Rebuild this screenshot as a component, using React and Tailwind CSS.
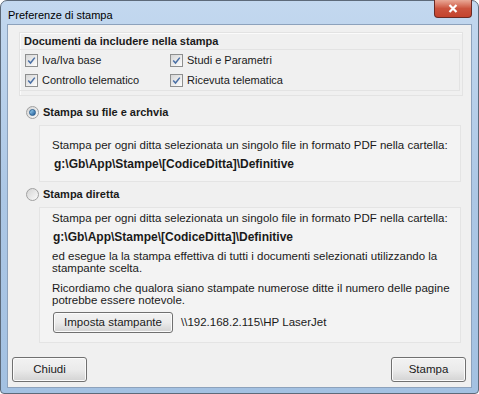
import React from "react";

const font = { fontFamily: '"Liberation Sans", Arial, sans-serif' };

const Check = ({ label }) => (
  <div className="flex items-center gap-[4px] h-[20px]">
    <div className="w-[13px] h-[13px] border border-[#8e8f8f] bg-gradient-to-br from-[#d6d6d6] to-[#fdfdfd] flex items-center justify-center">
      <svg width="9" height="9" viewBox="0 0 9 9">
        <path d="M1.2 4.6 L3.5 7 L7.8 1.6" fill="none" stroke="#4a6fa5" strokeWidth="1.5" />
      </svg>
    </div>
    <span>{label}</span>
  </div>
);

const Radio = ({ checked, label }) => (
  <div className="flex items-center gap-[4px] h-[20px] font-bold">
    <div className="w-[13px] h-[13px] rounded-full border border-[#a0a0a0] bg-gradient-to-br from-[#d4d4d4] to-[#fbfbfb] flex items-center justify-center">
      {checked && (
        <div className="w-[7px] h-[7px] rounded-full bg-gradient-to-br from-[#9fd8f8] to-[#1d5a96] border border-[#2a5f8f]" />
      )}
    </div>
    <span>{label}</span>
  </div>
);

const Btn = ({ children, className }) => (
  <div
    className={`flex items-center justify-center rounded-[3px] border border-[#707070] bg-gradient-to-b from-[#f2f2f2] via-[#ebebeb] to-[#d3d3d3] shadow-[inset_0_0_0_1px_#fbfbfb] text-[11.5px] ${className}`}
  >
    {children}
  </div>
);

export default function App() {
  return (
    <div
      style={font}
      className="w-[479px] h-[394px] text-[11px] text-[#1a1a1a] bg-white"
    >
      <div className="w-full h-full rounded-t-[7px] rounded-b-[4px] border border-[#5d6a7a] bg-gradient-to-b from-[#c3d8ef] via-[#acc7e5] to-[#a3c1e2] flex flex-col px-[6px] pb-[5px]">
        {/* title bar */}
        <div className="h-[23px] flex items-start justify-between">
          <span className="pl-[1px] pt-[6px] text-[11px] text-black">
            Preferenze di stampa
          </span>
          <div className="w-[38px] h-[18px] mt-[-1px] rounded-b-[4px] border border-t-0 border-[#6b2a24] bg-gradient-to-b from-[#e9a897] via-[#cb533e] to-[#c4432d] flex items-center justify-center">
            <svg width="12" height="9" viewBox="0 0 12 9">
              <path d="M2.5 1 L9.5 8 M9.5 1 L2.5 8" stroke="white" strokeWidth="2.2" />
            </svg>
          </div>
        </div>

        {/* client area */}
        <div className="flex-1 bg-[#f0f0f0] border border-[#8da2bc] flex flex-col pl-[11px] pr-[8px] pt-[7px]">
          {/* group documenti */}
          <div className="h-[64px] border border-[#e3e3e3] shadow-[inset_1px_1px_0_#fbfbfb] pl-[4px] pt-[1px]">
            <div className="font-bold h-[14px] leading-[14px]">
              Documenti da includere nella stampa
            </div>
            <div className="border border-[#e3e3e3] border-l-0 ml-[-4px] mr-[2px] pl-[5px] mt-[1px] grid grid-cols-[145px_1fr]">
              <Check label="Iva/Iva base" />
              <Check label="Studi e Parametri" />
              <Check label="Controllo telematico" />
              <Check label="Ricevuta telematica" />
            </div>
          </div>

          {/* stampa su file */}
          <div className="pl-[7px] mt-[6px]">
            <Radio checked label="Stampa su file e archvia" />
          </div>
          <div className="h-[57px] ml-[20px] mr-[2px] mt-[3px] border border-[#e4e4e4] bg-[#f3f3f3] pl-[12px] pt-[10px] leading-[19px] text-[11.5px] whitespace-nowrap">
            <div>
              Stampa per ogni ditta selezionata un singolo file in formato PDF
              nella cartella:
            </div>
            <div className="font-bold pl-[2px] text-[12px]">
              g:\Gb\App\Stampe\[CodiceDitta]\Definitive
            </div>
          </div>

          {/* stampa diretta */}
          <div className="pl-[7px] mt-[2px]">
            <Radio label="Stampa diretta" />
          </div>
          <div className="h-[136px] ml-[20px] mr-[2px] mt-[3px] border border-[#e4e4e4] bg-[#f3f3f3] pl-[12px] pt-[1px] text-[11.5px] whitespace-nowrap">
            <div className="leading-[19px]">
              Stampa per ogni ditta selezionata un singolo file in formato PDF
              nella cartella:
            </div>
            <div className="font-bold pl-[1px] leading-[19px] text-[12px]">
              g:\Gb\App\Stampe\[CodiceDitta]\Definitive
            </div>
            <div className="mt-[4px] leading-[11.5px]">
              ed esegue la la stampa effettiva di tutti i documenti selezionati
              utilizzando la
              <br />
              stampante scelta.
            </div>
            <div className="mt-[9px] leading-[11.5px]">
              Ricordiamo che qualora siano stampate numerose ditte il numero
              delle pagine
              <br />
              potrebbe essere notevole.
            </div>
            <div className="flex items-center mt-[6px] gap-[8px] ml-[1px]">
              <Btn className="w-[120px] h-[21px]">Imposta stampante</Btn>
              <span>\\192.168.2.115\HP LaserJet</span>
            </div>
          </div>

          {/* bottom buttons */}
          <div className="flex justify-between mt-[14px] ml-[-7px] mr-[-3px]">
            <Btn className="w-[75px] h-[25px]">Chiudi</Btn>
            <Btn className="w-[75px] h-[25px]">Stampa</Btn>
          </div>
        </div>
      </div>
    </div>
  );
}
